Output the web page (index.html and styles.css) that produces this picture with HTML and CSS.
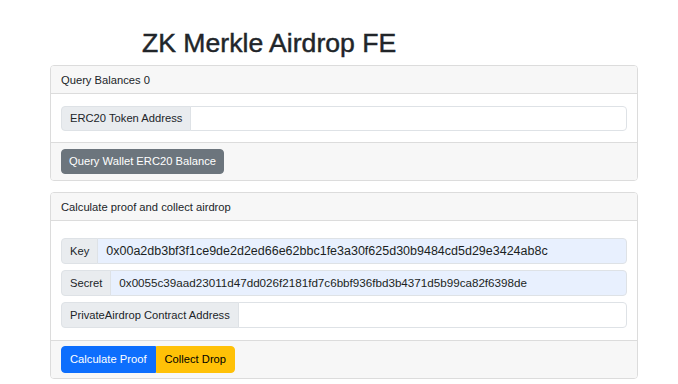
FILE: index.html
```html
<!DOCTYPE html>
<html>
<head>
<meta charset="utf-8">
<link rel="stylesheet" href="styles.css">
</head>
<body>
<div class="page">
  <h1 class="title">ZK Merkle Airdrop FE</h1>

  <div class="card">
    <div class="card-header">Query Balances 0</div>
    <div class="card-body">
      <div class="input-group">
        <span class="input-label">ERC20 Token Address</span>
        <input class="input" type="text" value="">
      </div>
    </div>
    <div class="card-footer">
      <button class="btn btn-secondary">Query Wallet ERC20 Balance</button>
    </div>
  </div>

  <div class="card">
    <div class="card-header">Calculate proof and collect airdrop</div>
    <div class="card-body card-body-form">
      <div class="input-group">
        <span class="input-label">Key</span>
        <input class="input input-filled" type="text" value="0x00a2db3bf3f1ce9de2d2ed66e62bbc1fe3a30f625d30b9484cd5d29e3424ab8c">
      </div>
      <div class="input-group">
        <span class="input-label">Secret</span>
        <input class="input input-filled input-secret" type="text" value="0x0055c39aad23011d47dd026f2181fd7c6bbf936fbd3b4371d5b99ca82f6398de">
      </div>
      <div class="input-group">
        <span class="input-label">PrivateAirdrop Contract Address</span>
        <input class="input" type="text" value="">
      </div>
    </div>
    <div class="card-footer card-footer-group">
      <div class="btn-group">
        <button class="btn btn-primary">Calculate Proof</button>
        <button class="btn btn-warning">Collect Drop</button>
      </div>
    </div>
  </div>
</div>
</body>
</html>
```
FILE: styles.css
```css
* { box-sizing: border-box; }
html, body {
  margin: 0;
  padding: 0;
  background: #ffffff;
}
body {
  font-family: "Liberation Sans", Arial, sans-serif;
  font-size: 11.2px;
  line-height: 1.5;
  color: #212529;
}
.page {
  width: 588px;
  margin-left: 50px;
  padding-top: 28px;
}
.title {
  margin: 0 0 5px 0;
  padding-left: 92px;
  font-size: 26.6px;
  line-height: 1.2;
  font-weight: 500;
  color: #212529;
  -webkit-text-stroke: 0.45px #212529;
}
.card {
  border: 1px solid #dcdcdc;
  border-radius: 4px;
  margin-bottom: 11px;
  overflow: hidden;
}
.card-header {
  background: #f7f7f7;
  border-bottom: 1px solid #dcdcdc;
  padding: 5.6px 10px;
  height: 28px;
}
.card-body {
  padding: 12px 10px 11px 10px;
  display: flex;
  flex-direction: column;
  gap: 6px;
}
.card-body-form {
  padding-top: 17px;
  padding-bottom: 12px;
}
.card-body-form .input-group {
  height: 26px;
}
.card-footer {
  background: #f7f7f7;
  border-top: 1px solid #dcdcdc;
  padding: 6px 10px;
}
.card-footer-group {
  padding: 5px 10px;
}
.input-group {
  display: flex;
  height: 25px;
}
.input-label {
  display: flex;
  align-items: center;
  padding: 0 8px;
  background: #e9ecef;
  border: 1px solid #dee2e6;
  border-radius: 4px 0 0 4px;
  color: #212529;
  white-space: nowrap;
}
.input {
  flex: 1;
  min-width: 0;
  margin: 0;
  margin-left: -1px;
  padding: 0 8px;
  border: 1px solid #dee2e6;
  border-radius: 0 4px 4px 0;
  background: #ffffff;
  font-family: "Liberation Sans", Arial, sans-serif;
  font-size: 11.2px;
  color: #212529;
  outline: none;
}
.input-filled {
  background: #e8f0fe;
  font-size: 12.5px;
  color: #1b1f23;
}
.input-secret {
  font-size: 11.65px;
}
.btn {
  font-family: "Liberation Sans", Arial, sans-serif;
  font-size: 11.2px;
  line-height: 1.5;
  height: 25px;
  padding: 0 7px;
  border: 1px solid transparent;
  border-radius: 4px;
  cursor: pointer;
}
.btn-secondary {
  background: #6c757d;
  border-color: #6c757d;
  color: #ffffff;
}
.btn-group {
  display: flex;
}
.btn-group .btn {
  height: 27px;
  padding: 0 8px;
}
.btn-primary {
  background: #0d6efd;
  border-color: #0d6efd;
  color: #ffffff;
  border-radius: 4px 0 0 4px;
}
.btn-warning {
  background: #ffc107;
  border-color: #ffc107;
  color: #000000;
  border-radius: 0 4px 4px 0;
}
```
